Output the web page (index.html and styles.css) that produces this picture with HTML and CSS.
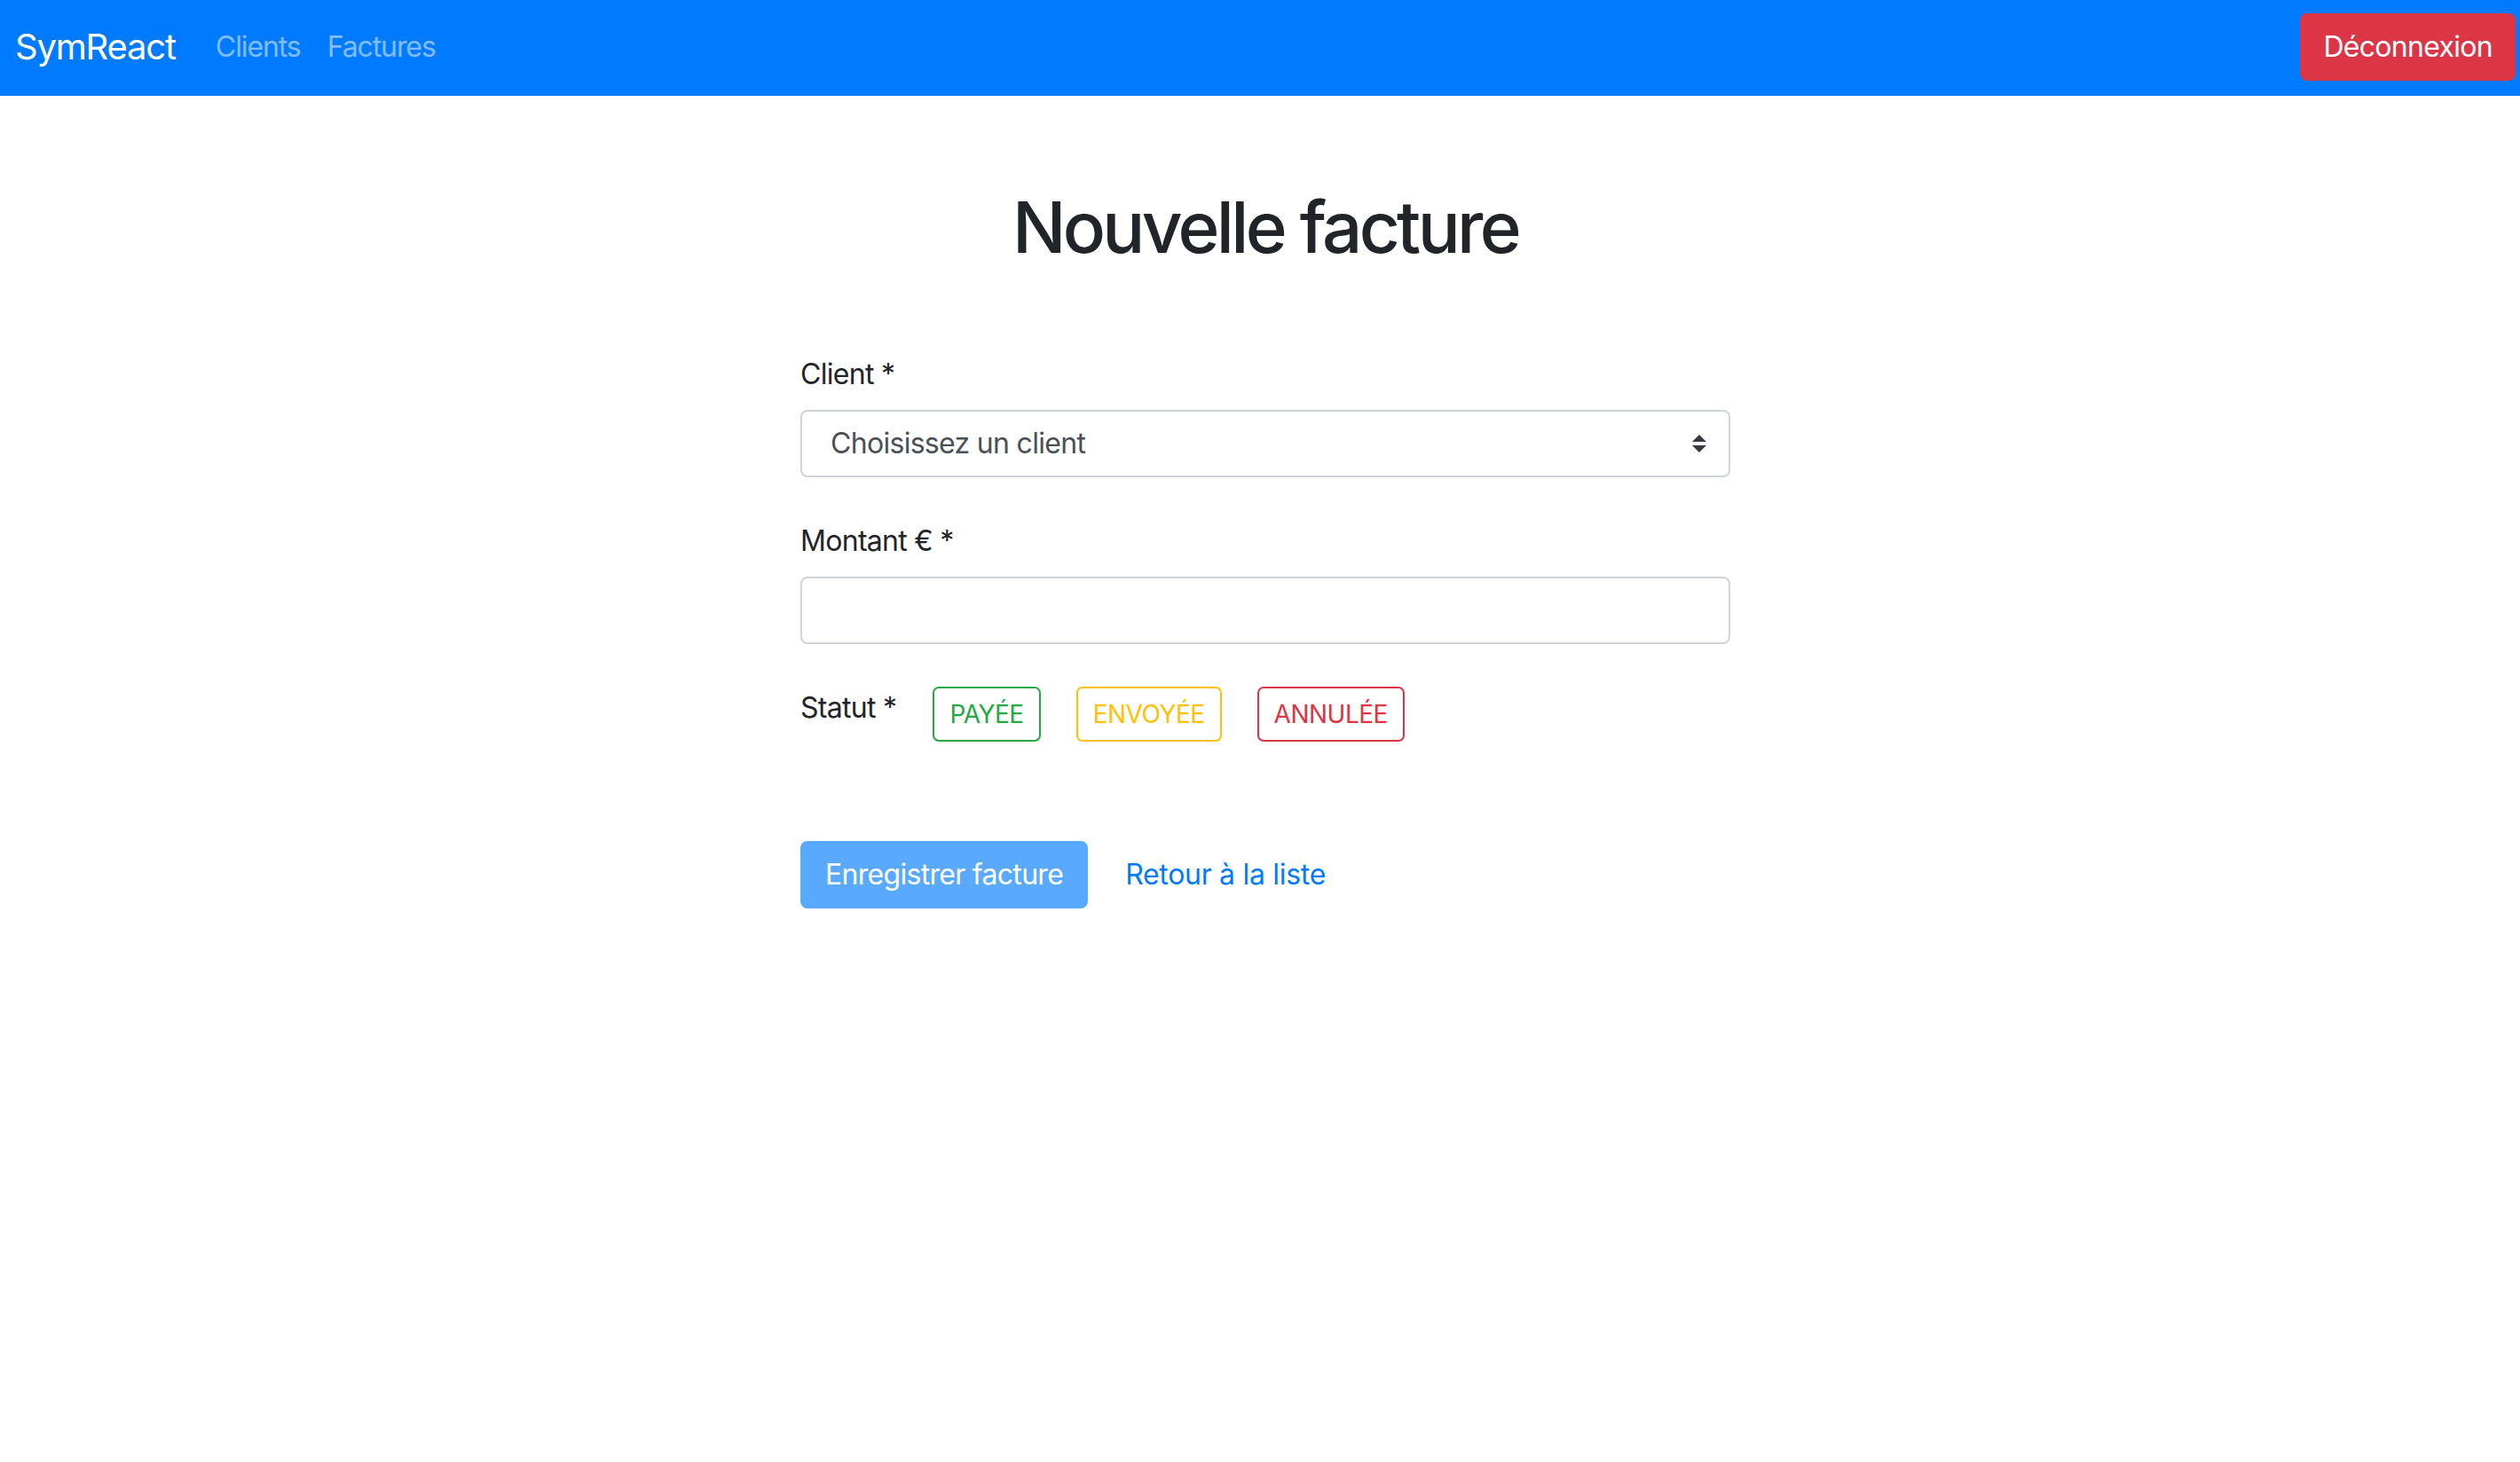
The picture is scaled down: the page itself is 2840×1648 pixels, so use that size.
FILE: index.html
```html
<!DOCTYPE html>
<html lang="fr">
<head>
<meta charset="utf-8">
<title>SymReact</title>
<link rel="stylesheet" href="styles.css">
</head>
<body>
<nav class="navbar">
  <a class="brand" href="#">SymReact</a>
  <ul class="nav-links">
    <li><a class="nav-link" href="#">Clients</a></li>
    <li><a class="nav-link" href="#">Factures</a></li>
  </ul>
  <a class="btn btn-danger" href="#">Déconnexion</a>
</nav>
<main class="page">
  <h1 class="title">Nouvelle facture</h1>
  <form class="invoice-form">
    <div class="form-group">
      <label class="label">Client *</label>
      <div class="select">
        <span class="select-value">Choisissez un client</span>
        <svg class="select-arrow" width="16" height="20" viewBox="0 0 4 5"><path d="M2 0L0 2h4zm0 5L0 3h4z" fill="#343a40"/></svg>
      </div>
    </div>
    <div class="form-group">
      <label class="label">Montant € *</label>
      <div class="input"></div>
    </div>
    <div class="form-group status-row">
      <label class="label status-label">Statut *</label>
      <div class="badges">
        <span class="badge badge-success">PAYÉE</span>
        <span class="badge badge-warning">ENVOYÉE</span>
        <span class="badge badge-danger">ANNULÉE</span>
      </div>
    </div>
    <div class="actions">
      <span class="btn btn-primary-disabled">Enregistrer facture</span>
      <a class="link" href="#">Retour à la liste</a>
    </div>
  </form>
</main>
</body>
</html>
```

FILE: styles.css
```css
* { box-sizing: border-box; }

html, body {
  margin: 0;
  padding: 0;
  background: #fff;
}

body {
  font-family: Inter, "Noto Sans", "Liberation Sans", sans-serif;
  font-size: 32px;
  line-height: 48px;
  color: #212529;
  letter-spacing: -0.7px;
}

a { text-decoration: none; }

.navbar {
  display: flex;
  align-items: center;
  height: 108px;
  padding: 15px 5px 17px 17px;
  background: #007bff;
}

.brand {
  color: #fff;
  font-size: 40px;
  line-height: 60px;
  margin-right: 30px;
  letter-spacing: -1.2px;
}

.nav-links {
  display: flex;
  list-style: none;
  margin: 0;
  padding: 0;
  flex: 1;
}

.nav-link {
  display: block;
  padding: 0 15px;
  color: rgba(255, 255, 255, 0.5);
  letter-spacing: -1.1px;
}

.btn {
  display: inline-block;
  height: 76px;
  padding: 12px 24px;
  border: 2px solid transparent;
  border-radius: 8px;
  line-height: 48px;
  font-size: 32px;
}

.btn-danger {
  background: #dc3545;
  border-color: #dc3545;
  color: #fff;
}

.page {
  padding-left: 12px;
  padding-top: 2px;
}

.title {
  margin: 98px 0 94px;
  font-size: 80px;
  line-height: 96px;
  font-weight: 500;
  text-align: center;
  letter-spacing: -3.7px;
}

.invoice-form {
  width: 1048px;
  margin: 0 auto;
}

.form-group {
  margin-bottom: 48px;
}

.label {
  display: block;
  margin-bottom: 16px;
}

.select,
.input {
  display: flex;
  align-items: center;
  justify-content: space-between;
  height: 76px;
  padding: 12px 24px 12px 32px;
  border: 2px solid #ced4da;
  border-radius: 8px;
  color: #495057;
  background: #fff;
}

.select-arrow {
  display: block;
  margin-right: 1px;
}

.status-row {
  display: flex;
  align-items: flex-start;
  margin-bottom: 112px;
}

.status-label {
  margin: 0 41px 0 0;
}

.badges {
  display: flex;
  gap: 40px;
}

.badge {
  display: inline-block;
  height: 62px;
  padding: 7px 17px;
  border: 2px solid;
  border-radius: 7px;
  font-size: 28px;
  line-height: 44px;
  letter-spacing: -0.5px;
}

.badge-success { color: #28a745; border-color: #28a745; }
.badge-warning { color: #ffc107; border-color: #ffc107; }
.badge-danger { color: #dc3545; border-color: #dc3545; }

.actions {
  display: flex;
  align-items: center;
}

.btn-primary-disabled {
  background: #59a9ff;
  border-color: #59a9ff;
  color: #fff;
  padding: 12px 26px;
}

.link {
  margin-left: 42px;
  color: #007bff;
  letter-spacing: -0.3px;
}
```
